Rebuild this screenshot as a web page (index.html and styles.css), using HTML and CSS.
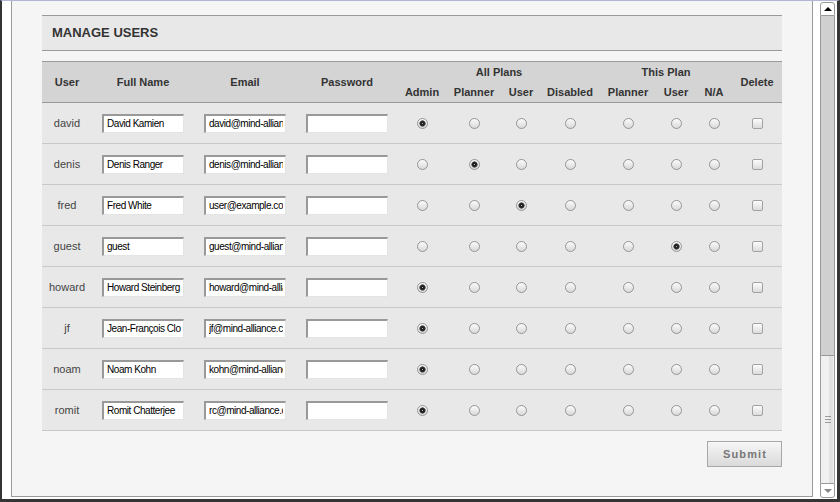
FILE: index.html
```html
<!DOCTYPE html>
<html>
<head>
<meta charset="utf-8">
<title>Manage Users</title>
<link rel="stylesheet" href="styles.css">
</head>
<body>
<div class="window">
  <div class="viewport">
    <div class="panel">
      <div class="section-title">MANAGE USERS</div>
      <table class="users">
        <colgroup>
          <col class="c-user"><col class="c-field"><col class="c-field"><col class="c-field">
          <col class="c-admin"><col class="c-planner"><col class="c-puser"><col class="c-disabled">
          <col class="c-planner"><col class="c-tuser"><col class="c-na"><col class="c-delete">
        </colgroup>
        <thead>
          <tr>
            <th rowspan="2">User</th>
            <th rowspan="2">Full Name</th>
            <th rowspan="2">Email</th>
            <th rowspan="2">Password</th>
            <th colspan="4">All Plans</th>
            <th colspan="3">This Plan</th>
            <th rowspan="2">Delete</th>
          </tr>
          <tr>
            <th>Admin</th><th>Planner</th><th>User</th><th>Disabled</th>
            <th>Planner</th><th>User</th><th>N/A</th>
          </tr>
        </thead>
        <tbody>
          <tr>
            <td>david</td>
            <td><input class="field" type="text" value="David Kamien"></td>
            <td><input class="field" type="text" value="david@mind-alliance.com"></td>
            <td><input class="field" type="password" value=""></td>
            <td><input class="radio" type="radio" name="a1" checked></td>
            <td><input class="radio" type="radio" name="a1"></td>
            <td><input class="radio" type="radio" name="a1"></td>
            <td><input class="radio" type="radio" name="a1"></td>
            <td><input class="radio" type="radio" name="p1"></td>
            <td><input class="radio" type="radio" name="p1"></td>
            <td><input class="radio" type="radio" name="p1"></td>
            <td><input class="check" type="checkbox"></td>
          </tr>
          <tr>
            <td>denis</td>
            <td><input class="field" type="text" value="Denis Ranger"></td>
            <td><input class="field" type="text" value="denis@mind-alliance.com"></td>
            <td><input class="field" type="password" value=""></td>
            <td><input class="radio" type="radio" name="a2"></td>
            <td><input class="radio" type="radio" name="a2" checked></td>
            <td><input class="radio" type="radio" name="a2"></td>
            <td><input class="radio" type="radio" name="a2"></td>
            <td><input class="radio" type="radio" name="p2"></td>
            <td><input class="radio" type="radio" name="p2"></td>
            <td><input class="radio" type="radio" name="p2"></td>
            <td><input class="check" type="checkbox"></td>
          </tr>
          <tr>
            <td>fred</td>
            <td><input class="field" type="text" value="Fred White"></td>
            <td><input class="field" type="text" value="user@example.com"></td>
            <td><input class="field" type="password" value=""></td>
            <td><input class="radio" type="radio" name="a3"></td>
            <td><input class="radio" type="radio" name="a3"></td>
            <td><input class="radio" type="radio" name="a3" checked></td>
            <td><input class="radio" type="radio" name="a3"></td>
            <td><input class="radio" type="radio" name="p3"></td>
            <td><input class="radio" type="radio" name="p3"></td>
            <td><input class="radio" type="radio" name="p3"></td>
            <td><input class="check" type="checkbox"></td>
          </tr>
          <tr>
            <td>guest</td>
            <td><input class="field" type="text" value="guest"></td>
            <td><input class="field" type="text" value="guest@mind-alliance.com"></td>
            <td><input class="field" type="password" value=""></td>
            <td><input class="radio" type="radio" name="a4"></td>
            <td><input class="radio" type="radio" name="a4"></td>
            <td><input class="radio" type="radio" name="a4"></td>
            <td><input class="radio" type="radio" name="a4"></td>
            <td><input class="radio" type="radio" name="p4"></td>
            <td><input class="radio" type="radio" name="p4" checked></td>
            <td><input class="radio" type="radio" name="p4"></td>
            <td><input class="check" type="checkbox"></td>
          </tr>
          <tr>
            <td>howard</td>
            <td><input class="field" type="text" value="Howard Steinberg"></td>
            <td><input class="field" type="text" value="howard@mind-alliance.com"></td>
            <td><input class="field" type="password" value=""></td>
            <td><input class="radio" type="radio" name="a5" checked></td>
            <td><input class="radio" type="radio" name="a5"></td>
            <td><input class="radio" type="radio" name="a5"></td>
            <td><input class="radio" type="radio" name="a5"></td>
            <td><input class="radio" type="radio" name="p5"></td>
            <td><input class="radio" type="radio" name="p5"></td>
            <td><input class="radio" type="radio" name="p5"></td>
            <td><input class="check" type="checkbox"></td>
          </tr>
          <tr>
            <td>jf</td>
            <td><input class="field" type="text" value="Jean-François Cloutier"></td>
            <td><input class="field" type="text" value="jf@mind-alliance.com"></td>
            <td><input class="field" type="password" value=""></td>
            <td><input class="radio" type="radio" name="a6" checked></td>
            <td><input class="radio" type="radio" name="a6"></td>
            <td><input class="radio" type="radio" name="a6"></td>
            <td><input class="radio" type="radio" name="a6"></td>
            <td><input class="radio" type="radio" name="p6"></td>
            <td><input class="radio" type="radio" name="p6"></td>
            <td><input class="radio" type="radio" name="p6"></td>
            <td><input class="check" type="checkbox"></td>
          </tr>
          <tr>
            <td>noam</td>
            <td><input class="field" type="text" value="Noam Kohn"></td>
            <td><input class="field" type="text" value="kohn@mind-alliance.com"></td>
            <td><input class="field" type="password" value=""></td>
            <td><input class="radio" type="radio" name="a7" checked></td>
            <td><input class="radio" type="radio" name="a7"></td>
            <td><input class="radio" type="radio" name="a7"></td>
            <td><input class="radio" type="radio" name="a7"></td>
            <td><input class="radio" type="radio" name="p7"></td>
            <td><input class="radio" type="radio" name="p7"></td>
            <td><input class="radio" type="radio" name="p7"></td>
            <td><input class="check" type="checkbox"></td>
          </tr>
          <tr>
            <td>romit</td>
            <td><input class="field" type="text" value="Romit Chatterjee"></td>
            <td><input class="field" type="text" value="rc@mind-alliance.com"></td>
            <td><input class="field" type="password" value=""></td>
            <td><input class="radio" type="radio" name="a8" checked></td>
            <td><input class="radio" type="radio" name="a8"></td>
            <td><input class="radio" type="radio" name="a8"></td>
            <td><input class="radio" type="radio" name="a8"></td>
            <td><input class="radio" type="radio" name="p8"></td>
            <td><input class="radio" type="radio" name="p8"></td>
            <td><input class="radio" type="radio" name="p8"></td>
            <td><input class="check" type="checkbox"></td>
          </tr>
        </tbody>
      </table>
      <div class="actions">
        <button class="submit" type="button">Submit</button>
      </div>
    </div>
  </div>
  <div class="scrollbar">
    <div class="sb-up"><span class="tri-up"></span></div>
    <div class="sb-track"></div>
    <div class="sb-thumb">
      <span class="grip"></span><span class="grip"></span><span class="grip"></span>
    </div>
    <div class="sb-down"><span class="tri-down"></span></div>
  </div>
</div>
</body>
</html>
```

FILE: styles.css
```css
html, body {
  margin: 0;
  padding: 0;
}

body {
  width: 840px;
  height: 502px;
  overflow: hidden;
  background: #333;
  font-family: "Liberation Sans", Arial, sans-serif;
}

.window {
  display: flex;
  box-sizing: border-box;
  width: 840px;
  height: 502px;
  background: #fff;
  border-top: 1px solid #b3b6d6;
  border-left: 2px solid #353535;
  border-right: 3px solid #353535;
  border-bottom: 3px solid #353535;
}

.viewport {
  flex: 1;
  display: flex;
  flex-direction: column;
  padding: 0 7px 2px 9px;
}

.panel {
  flex: 1;
  background: #f5f5f5;
  border: 1px solid #9a9a9a;
  border-top: none;
  padding: 14px 30px 0 30px;
}

.section-title {
  height: 34px;
  line-height: 34px;
  background: #e8e8e8;
  border-top: 1px solid #9a9a9a;
  border-bottom: 1px solid #9a9a9a;
  padding-left: 10px;
  font-size: 13px;
  font-weight: bold;
  color: #333;
}

.users {
  margin-top: 10px;
  width: 740px;
  table-layout: fixed;
  border-collapse: collapse;
  border-top: 1px solid #9a9a9a;
}

.c-user { width: 50px; }
.c-field { width: 102px; }
.c-admin { width: 48px; }
.c-planner { width: 56px; }
.c-puser { width: 38px; }
.c-disabled { width: 60px; }
.c-tuser { width: 40px; }
.c-na { width: 36px; }
.c-delete { width: 50px; }

.users thead {
  background: #d4d4d4;
  border-bottom: 1px solid #9a9a9a;
}

.users th {
  height: 20px;
  padding: 0;
  font-size: 11px;
  font-weight: bold;
  color: #333;
  text-align: center;
  vertical-align: middle;
  white-space: nowrap;
}

.users tbody tr {
  background: #e8e8e8;
  border-bottom: 1px solid #c9c9c9;
}

.users td {
  height: 40px;
  padding: 0;
  text-align: center;
  vertical-align: middle;
  font-size: 11px;
  color: #444;
}

.field {
  display: block;
  margin: 0 auto;
  box-sizing: border-box;
  width: 82px;
  height: 19px;
  border-style: solid;
  border-width: 2px 1px 1px 2px;
  border-color: #999 #e4e4e4 #e4e4e4 #999;
  background: #fff;
  padding: 0 2px 0 3px;
  font-family: "Liberation Sans", Arial, sans-serif;
  font-size: 10px;
  letter-spacing: -0.45px;
  color: #000;
  outline: none;
}

.radio,
.check {
  appearance: none;
  -webkit-appearance: none;
  display: block;
  margin: 0 auto;
  box-sizing: border-box;
  width: 11px;
  height: 11px;
  border: 1px solid #959595;
  background: linear-gradient(#fbfbfb, #d9d9d9);
}

.radio {
  border-radius: 50%;
}

.radio:checked {
  background:
    radial-gradient(circle at 50% 50%, #bbb 0, #1e1e1e 1px, #2a2a2a 2.2px, #7a7a7a 3px, transparent 3.4px),
    linear-gradient(#fbfbfb, #d9d9d9);
}

.check {
  border-radius: 2px;
  border-color: #a2a2a2;
  background: linear-gradient(#fcfcfc, #dcdcdc);
}

.actions {
  display: flex;
  justify-content: flex-end;
  margin-top: 10px;
}

.submit {
  box-sizing: border-box;
  width: 75px;
  height: 26px;
  border: 1px solid #a8a8a8;
  background: linear-gradient(#f6f6f6, #dadada);
  font-family: "Liberation Sans", Arial, sans-serif;
  font-size: 11px;
  font-weight: bold;
  letter-spacing: 1.1px;
  color: #777;
  padding: 0 0 0 1px;
}

.scrollbar {
  width: 15px;
  margin: 1px 2px 1px 0;
  display: flex;
  flex-direction: column;
}

.sb-up,
.sb-down {
  box-sizing: border-box;
  background: #fff;
  border: 1px solid #9a9a9a;
  display: flex;
  align-items: center;
  justify-content: center;
}

.sb-up {
  height: 14px;
  border-radius: 3px 3px 0 0;
}

.sb-down {
  height: 15px;
  border-radius: 0 0 3px 3px;
}

.tri-up {
  width: 0;
  height: 0;
  border-left: 4px solid transparent;
  border-right: 4px solid transparent;
  border-bottom: 4px solid #000;
}

.tri-down {
  width: 0;
  height: 0;
  border-left: 4px solid transparent;
  border-right: 4px solid transparent;
  border-top: 4px solid #888;
}

.sb-track {
  flex: 1;
  box-sizing: border-box;
  background: #d0d0d0;
  border-left: 1px solid #9a9a9a;
  border-right: 1px solid #9a9a9a;
}

.sb-thumb {
  box-sizing: border-box;
  height: 128px;
  border: 1px solid #9a9a9a;
  border-bottom: none;
  background: linear-gradient(to right, #f0f0f0 0, #f0f0f0 60%, #e1e1e1 60%, #e1e1e1 92%, #f0f0f0 92%);
  display: flex;
  flex-direction: column;
  align-items: center;
  justify-content: center;
  gap: 2px;
}

.grip {
  display: block;
  width: 6px;
  height: 1px;
  background: #9a9a9a;
}
```
